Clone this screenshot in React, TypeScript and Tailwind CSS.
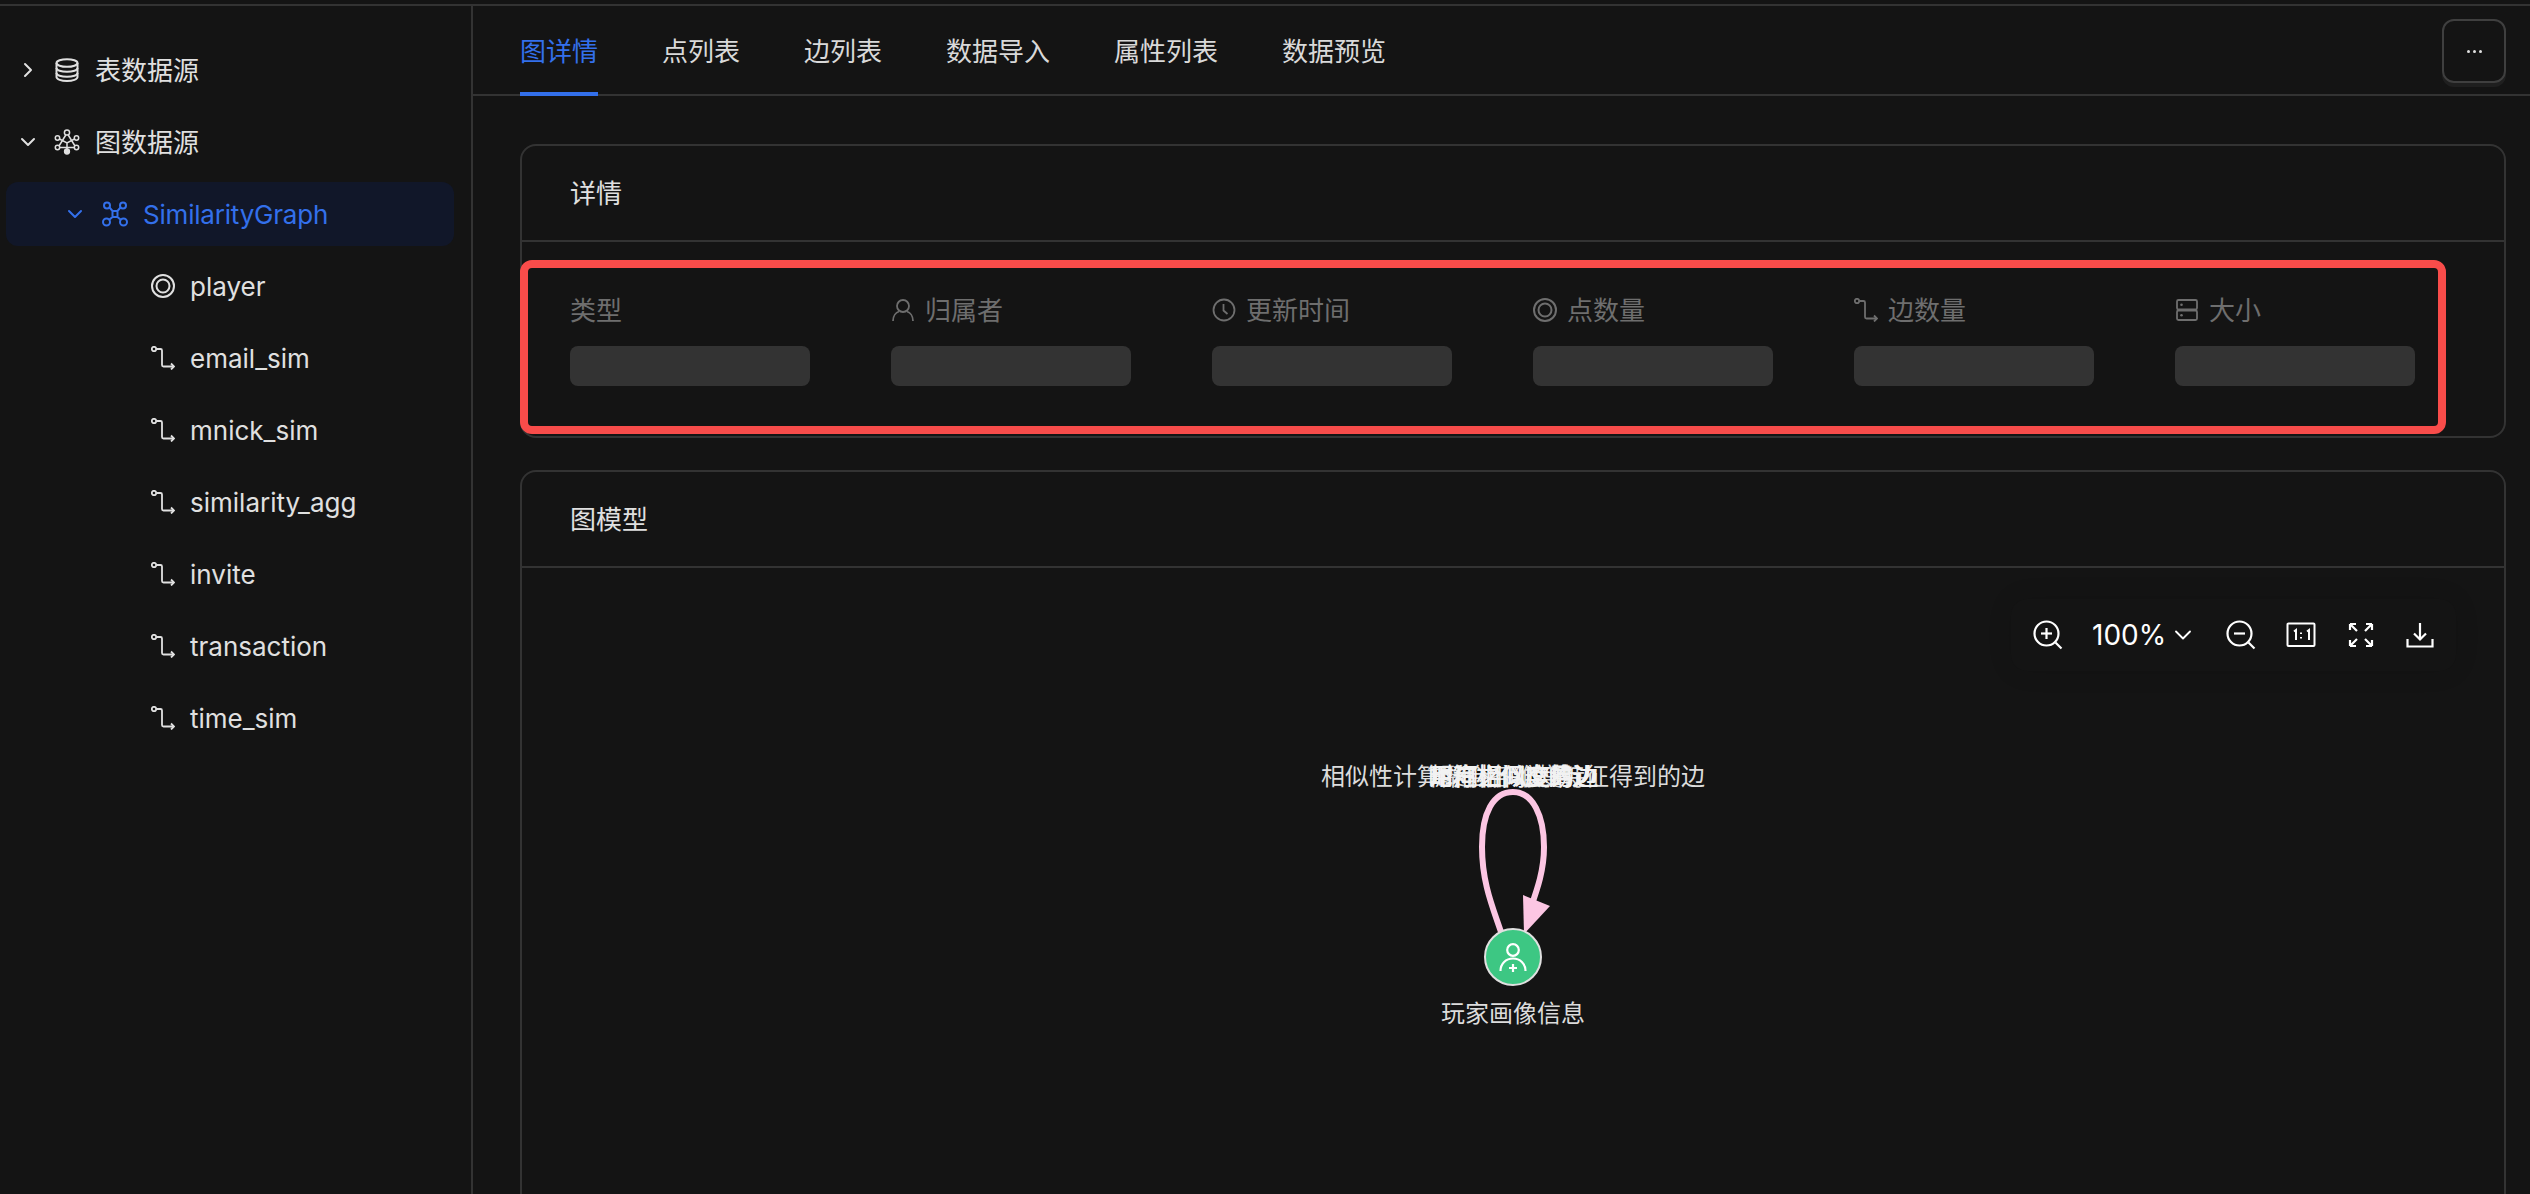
import { ChevronDown, ChevronRight } from "lucide-react";

const FONT = "font-['Inter','Noto_Sans_CJK_SC',sans-serif]";

function DatabaseIcon() {
  return (
    <svg width="26" height="26" viewBox="0 0 26 26" fill="none" stroke="currentColor" strokeWidth="2">
      <ellipse cx="13" cy="6" rx="10.5" ry="3.8" />
      <path d="M2.5 6v14c0 2.2 4.7 4 10.5 4s10.5-1.800 10.500-4V6" />
      <path d="M2.500 11c0 2.200 4.700 3.800 10.500 3.800s10.500-1.600 10.500-3.800" />
      <path d="M2.500 16c0 2.200 4.700 3.800 10.500 3.800s10.500-1.600 10.500-3.800" />
    </svg>
  );
}

function GraphDataIcon() {
  return (
    <svg width="26" height="26" viewBox="0 0 26 26" fill="none" stroke="currentColor" strokeWidth="1.5">
      <circle cx="13" cy="3.500" r="2.600" />
      <circle cx="3.500" cy="9" r="2.200" />
      <circle cx="22.500" cy="9" r="2.200" />
      <circle cx="3.500" cy="18.500" r="2.200" />
      <circle cx="22.500" cy="18.500" r="2.200" />
      <circle cx="13" cy="22.500" r="2.400" fill="currentColor" />
      <path d="M11.800 6L5 17M14.200 6L21 17M5.500 18.500H20.500M5.500 10l7.500 4 7.500-4M13 14v7" />
    </svg>
  );
}

function SubGraphIcon() {
  return (
    <svg width="26" height="26" viewBox="0 0 26 26" fill="none" stroke="currentColor" strokeWidth="2">
      <circle cx="5" cy="4.500" r="3" />
      <circle cx="21" cy="4.500" r="3" />
      <circle cx="4.500" cy="21" r="3.500" />
      <circle cx="21.500" cy="21" r="3.500" />
      <path d="M7.500 6.500l3 3.500h5l3-3.500M10.500 10v6l-3.500 3M15.500 10v6l3.500 3M10.500 16h5" />
    </svg>
  );
}

function VertexIcon({ size = 24 }: { size?: number }) {
  return (
    <svg width={size} height={size} viewBox="0 0 24 24" fill="none" stroke="currentColor" strokeWidth="2">
      <circle cx="12" cy="12" r="11" />
      <circle cx="12" cy="12" r="6.500" />
    </svg>
  );
}

function EdgeIcon({ size = 24 }: { size?: number }) {
  return (
    <svg width={size} height={size} viewBox="0 0 24 24" fill="none" stroke="currentColor" strokeWidth="1.800">
      <circle cx="3" cy="3" r="2.200" />
      <path d="M5.500 3H9.500a1.500 1.500 0 0 1 1.500 1.500V19a1.500 1.500 0 0 0 1.500 1.500H23" />
      <path d="M20 17.500l3 3-3 3" />
    </svg>
  );
}

function ClockIcon() {
  return (
    <svg width="24" height="24" viewBox="0 0 24 24" fill="none" stroke="currentColor" strokeWidth="1.800">
      <circle cx="12" cy="12" r="10.500" />
      <path d="M11.500 6v6.500l4 3.500" />
    </svg>
  );
}

function UserIcon() {
  return (
    <svg width="24" height="24" viewBox="0 0 24 24" fill="none" stroke="currentColor" strokeWidth="1.800">
      <circle cx="12" cy="8" r="6" />
      <path d="M2 23c0-5 3-8.500 6-9.500M22 23c0-5-3-8.500-6-9.500" />
    </svg>
  );
}

function StorageIcon() {
  return (
    <svg width="24" height="24" viewBox="0 0 24 24" fill="none" stroke="currentColor" strokeWidth="1.800">
      <rect x="2" y="2" width="20" height="9.500" rx="1.500" />
      <rect x="2" y="12.500" width="20" height="9.500" rx="1.500" />
      <circle cx="6.500" cy="6.700" r="1.300" fill="currentColor" stroke="none" />
      <circle cx="6.500" cy="17.300" r="1.300" fill="currentColor" stroke="none" />
    </svg>
  );
}

function ZoomIcon({ plus }: { plus: boolean }) {
  return (
    <svg width="30" height="30" viewBox="0 0 30 30" fill="none" stroke="currentColor" strokeWidth="2.200">
      <circle cx="13.500" cy="13.500" r="12" />
      <path d="M8 13.500h11" />
      {plus && <path d="M13.500 8v11" />}
      <path d="M22.500 22.500l6 6" />
    </svg>
  );
}

function OneToOneIcon() {
  return (
    <svg width="30" height="26" viewBox="0 0 30 26" fill="none" stroke="currentColor" strokeWidth="2">
      <rect x="1.500" y="1.500" width="27" height="22.500" rx="1" />
      <path d="M8 9.500l2-1.500v10M21 9.500l2-1.500v10" />
      <path d="M15 10.500v1.600M15 15v1.600" />
    </svg>
  );
}

function FitIcon() {
  return (
    <svg width="26" height="26" viewBox="0 0 26 26" fill="none" stroke="currentColor" strokeWidth="2.200">
      <path d="M2 2l7 7M2 2h6M2 2v6" />
      <path d="M24 2l-7 7M24 2h-6M24 2v6" />
      <path d="M2 24l7-7M2 24h6M2 24v-6" />
      <path d="M24 24l-7-7M24 24h-6M24 24v-6" />
    </svg>
  );
}

function DownloadIcon() {
  return (
    <svg width="28" height="26" viewBox="0 0 28 26" fill="none" stroke="currentColor" strokeWidth="2.200">
      <path d="M14 1v16M8 11.500l6 6 6-6" />
      <path d="M1.500 17v7.500h25V17" />
    </svg>
  );
}

const TABS = ["图详情", "点列表", "边列表", "数据导入", "属性列表", "数据预览"];

const EDGES = ["email_sim", "mnick_sim", "similarity_agg", "invite", "transaction", "time_sim"];

const DETAILS = [
  { label: "类型", icon: null },
  { label: "归属者", icon: <UserIcon /> },
  { label: "更新时间", icon: <ClockIcon /> },
  { label: "点数量", icon: <VertexIcon /> },
  { label: "边数量", icon: <EdgeIcon /> },
  { label: "大小", icon: <StorageIcon /> },
];

// 这些边的名称在图上叠在一起
const EDGE_LABELS = [
  "邮箱相似度的边",
  "昵称相似度的边",
  "用户之间邀请边",
  "用户之间交易边",
  "时间相似度的边",
];

function Sidebar() {
  return (
    <aside className="w-[473px] shrink-0 border-r-2 border-[#333333] pt-[32px] pl-[6px] pr-[17px] flex flex-col gap-2 text-[26px] text-[#e0e0e0]">
      <div className="h-16 flex items-center pl-[10px]">
        <ChevronRight size={24} strokeWidth={2} />
        <span className="ml-[14px] flex">
          <DatabaseIcon />
        </span>
        <span className="ml-[15px]">表数据源</span>
      </div>
      <div className="h-16 flex items-center pl-[10px]">
        <ChevronDown size={24} strokeWidth={2} />
        <span className="ml-[14px] flex">
          <GraphDataIcon />
        </span>
        <span className="ml-[15px]">图数据源</span>
      </div>
      <div className="h-16 flex items-center pl-[57px] rounded-xl bg-[#111729] text-[#3370eb]">
        <ChevronDown size={24} strokeWidth={2} />
        <span className="ml-[15px] flex">
          <SubGraphIcon />
        </span>
        <span className="ml-[15px] tracking-[-0.2px]">SimilarityGraph</span>
      </div>
      <div className="h-16 flex items-center pl-[145px]">
        <VertexIcon />
        <span className="ml-[15px]">player</span>
      </div>
      {EDGES.map((name) => (
        <div key={name} className="h-16 flex items-center pl-[145px]">
          <EdgeIcon />
          <span className="ml-[15px]">{name}</span>
        </div>
      ))}
    </aside>
  );
}

function Tabs() {
  return (
    <div className="h-[90px] shrink-0 border-b-2 border-[#333333] flex items-stretch justify-between pl-[47px] pr-6">
      <div className="flex gap-[64px] text-[26px] text-[#d9d9d9]">
        {TABS.map((tab, index) => (
          <div
            key={tab}
            className={
              index === 0
                ? "flex items-center h-[90px] pt-[4px] border-b-4 border-[#3370eb] text-[#3370eb]"
                : "flex items-center h-[90px] pt-[4px] border-b-4 border-transparent"
            }
          >
            {tab}
          </div>
        ))}
      </div>
      <div className="pt-[13px]">
        <button
          type="button"
          className="w-16 h-16 rounded-xl border-2 border-[#3f3f3f] shadow-[0_4px_0_#1f1f1f] flex items-center justify-center gap-[3px]"
        >
          <span className="w-[3px] h-[3px] rounded-full bg-[#e0e0e0]" />
          <span className="w-[3px] h-[3px] rounded-full bg-[#e0e0e0]" />
          <span className="w-[3px] h-[3px] rounded-full bg-[#e0e0e0]" />
        </button>
      </div>
    </div>
  );
}

function DetailCard() {
  return (
    <section className="relative h-[294px] rounded-2xl border-2 border-[#333333]">
      <div className="h-[96px] border-b-2 border-[#333333] flex items-center pl-[48px] text-[26px] text-[#e0e0e0]">
        详情
      </div>
      <div className="-ml-[2px] mt-[18px] w-[1926px] h-[174px] rounded-xl border-[8px] border-[#f84c4a] bg-[#141414] pl-[42px] pt-[28px] grid grid-cols-[repeat(6,321px)]">
        {DETAILS.map((item) => (
          <div key={item.label}>
            <div className="h-[28px] flex items-center gap-[10px] text-[26px] text-[#6e6e6e]">
              {item.icon}
              <span>{item.label}</span>
            </div>
            <div className="mt-[22px] w-[240px] h-10 rounded-lg bg-[#333333]" />
          </div>
        ))}
      </div>
    </section>
  );
}

function GraphToolbar() {
  return (
    <div className="absolute left-[1489px] top-[31px] h-[72px] px-[22px] rounded-2xl bg-[#141414] shadow-[0_0_24px_rgba(0,0,0,0.12)] flex items-center text-white">
      <ZoomIcon plus />
      <span className="ml-[29px] text-[28px]">100%</span>
      <ChevronDown size={28} strokeWidth={1.6} className="ml-[3px]" />
      <span className="ml-[29px] flex">
        <ZoomIcon plus={false} />
      </span>
      <span className="ml-[30px] flex">
        <OneToOneIcon />
      </span>
      <span className="ml-[32px] flex">
        <FitIcon />
      </span>
      <span className="ml-[32px] flex">
        <DownloadIcon />
      </span>
    </div>
  );
}

function GraphCanvas() {
  return (
    <div className="relative h-[640px]">
      <GraphToolbar />
      {/* 自环边和节点，坐标相对画布 */}
      <svg className="absolute left-[920px] top-[200px]" width="140" height="240" viewBox="0 0 140 240" fill="none">
        <path
          d="M59 164C51 140 40 115 40 79C40 45 51 24 71 24C91 24 102 48 102 79C102 103 95 122 88 142"
          stroke="#fcc6e3"
          strokeWidth="6"
        />
        <path d="M81 127L108 138L82 166Z" fill="#fcc6e3" />
        <circle cx="71" cy="189" r="28" fill="#3dc783" stroke="#e0e0e0" strokeWidth="2" />
        <g stroke="#ffffff" strokeWidth="2.200" fill="none">
          <circle cx="71" cy="182" r="5.800" />
          <path d="M58.500 203c0-7.500 5.500-12.500 12.500-12.500s12.500 5 12.500 12.500" />
          <path d="M71 196v8M67 200h8" />
        </g>
      </svg>
      <div className="absolute left-[799px] top-[195px] w-[382px] text-center text-[24px] leading-[28px] text-[#dcdcdc] whitespace-nowrap">
        相似性计算聚合各维度特征得到的边
      </div>
      {EDGE_LABELS.map((text, index) => (
        <div
          key={text}
          className="absolute top-[195px] text-[24px] leading-[28px] text-[#f2f2f2] whitespace-nowrap"
          style={{ left: 906 + index * 0.6 }}
        >
          {text}
        </div>
      ))}
      <div className="absolute left-[800px] top-[432px] w-[382px] text-center text-[24px] leading-[28px] text-[#dcdcdc]">
        玩家画像信息
      </div>
    </div>
  );
}

function GraphCard() {
  return (
    <section className="mt-[32px] rounded-2xl border-2 border-[#333333] h-[800px]">
      <div className="h-[96px] border-b-2 border-[#333333] flex items-center pl-[48px] text-[26px] text-[#e0e0e0]">
        图模型
      </div>
      <GraphCanvas />
    </section>
  );
}

export default function App() {
  return (
    <div className={`${FONT} h-[1194px] w-[2530px] overflow-hidden bg-[#141414] flex flex-col`}>
      <div className="h-[4px] shrink-0" />
      <div className="flex-1 min-h-0 flex border-t-2 border-[#333333]">
        <Sidebar />
        <main className="flex-1 min-w-0 flex flex-col">
          <Tabs />
          <div className="pt-[48px] pl-[47px] pr-[24px]">
            <DetailCard />
            <GraphCard />
          </div>
        </main>
      </div>
    </div>
  );
}
